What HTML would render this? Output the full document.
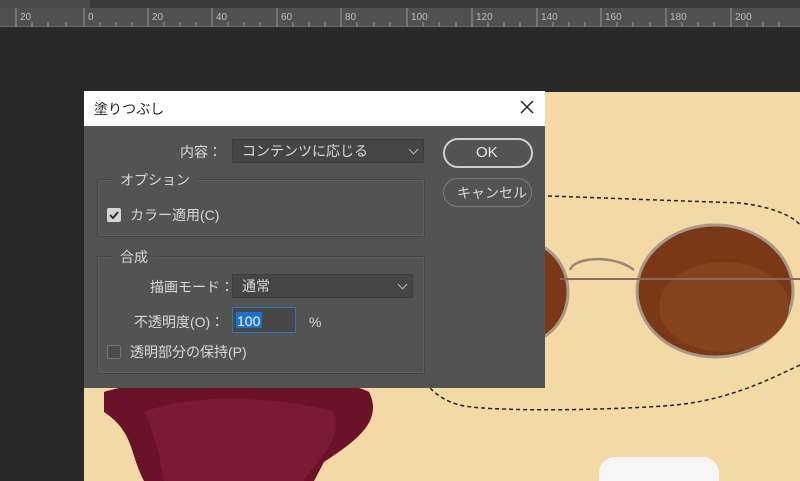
<!DOCTYPE html>
<html><head><meta charset="utf-8"><style>
*{margin:0;padding:0;box-sizing:border-box}
html{overflow:hidden;width:800px;height:481px}
body{width:800px;height:481px;overflow:hidden;background:#282828;position:relative;font-family:"Liberation Sans","Noto Sans CJK JP",sans-serif}
.a{position:absolute}
svg{display:block}
.t{color:#d8d8d8;font-size:14px;line-height:16px;white-space:nowrap}
.grp{border:1px solid #464646;box-shadow:inset 0 0 0 1px #5e5e5e}
.dd{background:#454545;border:1px solid #3c3c3c}
.chev{position:absolute;right:6px;top:5px;width:7px;height:7px;border-right:1.5px solid #bbb;border-bottom:1.5px solid #bbb;transform:rotate(45deg)}
</style></head><body>
<div class="a" style="left:0;top:0;width:800px;height:8px;background:#3a3a3a"></div>
<div class="a" style="left:0;top:0;width:90px;height:8px;background:#4a4a4a"></div>
<div class="a" style="left:0;top:8px;width:800px;height:19px;background:#505050;border-bottom:1px solid #6a6a6a"></div>
<svg class="a" style="left:0;top:0" width="800" height="28">
<g stroke="#999"><path d="M16 8V27M84 8V27M148 8V27M212 8V27M277 8V27M341 8V27M407 8V27M472 8V27M537 8V27M601 8V27M666 8V27M731 8V27"/>
<path d="M32 22V27M48 22V27M66 22V27M100 22V27M116 22V27M132 22V27M164 22V27M180 22V27M196 22V27M228 22V27M244 22V27M260 22V27M293 22V27M309 22V27M325 22V27M357 22V27M374 22V27M390 22V27M423 22V27M439 22V27M456 22V27M488 22V27M504 22V27M520 22V27M553 22V27M569 22V27M585 22V27M617 22V27M633 22V27M650 22V27M682 22V27M698 22V27M714 22V27M747 22V27M763 22V27M779 22V27"/></g>
<g fill="#bdbdbd" font-size="10" font-family="Liberation Sans"><text x="20" y="20">20</text><text x="88" y="20">0</text><text x="152" y="20">20</text><text x="216" y="20">40</text><text x="281" y="20">60</text><text x="345" y="20">80</text><text x="411" y="20">100</text><text x="476" y="20">120</text><text x="541" y="20">140</text><text x="605" y="20">160</text><text x="670" y="20">180</text><text x="735" y="20">200</text></g></svg>
<!-- canvas -->
<svg class="a" style="left:84px;top:92px" width="716" height="389">
<rect width="716" height="389" fill="#f2d9a6"/>
<path d="M20 300 C60 285 250 280 285 300 C300 330 270 350 240 370 L230 389 L60 389 C45 360 50 340 20 320 Z" fill="#6a1228"/>
<path d="M60 320 C110 300 200 305 250 320 C260 350 230 370 220 389 L80 389 C75 360 70 340 60 320 Z" fill="#7a1a35"/>
<rect x="515" y="365" width="120" height="40" rx="16" fill="#f6f6f6"/>
<path d="M464 104 L656 111 C690 115 710 125 716 133 M716 273 C680 290 640 310 580 314 C520 318 420 320 380 314 C360 310 350 300 346 296" fill="none" stroke="#222" stroke-width="1.5" stroke-dasharray="4 3"/>
<ellipse cx="631" cy="199" rx="78" ry="66" fill="#7a3816" stroke="#a8988a" stroke-width="3"/>
<ellipse cx="640" cy="215" rx="65" ry="45" fill="#86431f"/>
<ellipse cx="440" cy="200" rx="44" ry="50" fill="#7a3816" stroke="#a8988a" stroke-width="3"/>
<path d="M486 178 C490 165 530 162 550 178" stroke="#9a8575" stroke-width="2.5" fill="none"/>
<path d="M476 187 L716 187" stroke="#8a6a55" stroke-width="2" fill="none"/>
</svg>
<!-- dialog -->
<div class="a" style="left:84px;top:91px;width:461px;height:297px;background:#535353"></div>
<div class="a" style="left:84px;top:91px;width:461px;height:35px;background:#fff"></div>
<div class="a" style="left:94px;top:99px;font-size:14px;color:#222">塗りつぶし</div>
<svg class="a" style="left:520px;top:100px" width="14" height="14"><path d="M1 1L13 13M13 1L1 13" stroke="#222" stroke-width="1.5"/></svg>

<div class="a t" style="left:180px;top:144px">内容：</div>
<div class="a dd" style="left:232px;top:139px;width:192px;height:24px"><span class="t" style="position:absolute;left:9px;top:3px">コンテンツに応じる</span><div class="chev" style="top:6px"></div></div>

<div class="a" style="left:443px;top:138px;width:90px;height:30px;border:2px solid #cfcfcf;border-radius:15px"></div>
<div class="a t" style="left:476px;top:145px;color:#e8e8e8;font-size:15px">OK</div>
<div class="a" style="left:443px;top:178px;width:89px;height:29px;border:1.5px solid #7a7a7a;border-radius:15px"></div>
<div class="a t" style="left:457px;top:185px">キャンセル</div>

<div class="a grp" style="left:97px;top:179px;width:328px;height:58px"></div>
<div class="a t" style="left:114px;top:172px;background:#535353;padding:0 6px">オプション</div>
<div class="a" style="left:107px;top:208px;width:14px;height:14px;background:#d4d4d4;border-radius:2px"></div>
<svg class="a" style="left:107px;top:208px" width="14" height="14"><path d="M3 7L6 10L11 4" stroke="#333" stroke-width="2" fill="none"/></svg>
<div class="a t" style="left:130px;top:207px">カラー適用(C)</div>

<div class="a grp" style="left:97px;top:256px;width:328px;height:118px"></div>
<div class="a t" style="left:114px;top:249px;background:#535353;padding:0 6px">合成</div>
<div class="a t" style="left:150px;top:279px">描画モード：</div>
<div class="a dd" style="left:232px;top:274px;width:181px;height:24px"><span class="t" style="position:absolute;left:9px;top:3px">通常</span><div class="chev" style="top:6px"></div></div>
<div class="a t" style="left:134px;top:314px">不透明度(O)：</div>
<div class="a" style="left:232px;top:307px;width:64px;height:26px;border:1px solid #2a74c6;background:#474747"></div>
<div class="a" style="left:236px;top:312px;width:26px;height:16px;background:#1a6fd0"></div>
<div class="a t" style="left:237px;top:313px;color:#fff">100</div>
<div class="a t" style="left:309px;top:314px">%</div>
<div class="a" style="left:107px;top:345px;width:14px;height:14px;border:1px solid #777;background:#4a4a4a;border-radius:2px"></div>
<div class="a t" style="left:130px;top:344px">透明部分の保持(P)</div>
</body></html>
